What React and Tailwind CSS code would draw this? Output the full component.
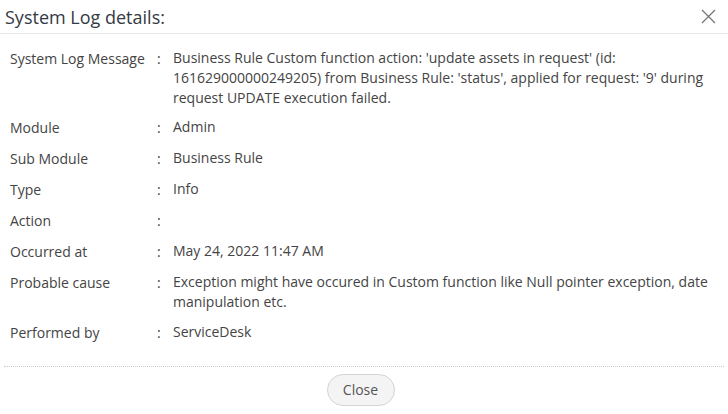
const rows = [
  {
    label: 'System Log Message',
    value:
      "Business Rule Custom function action: 'update assets in request' (id: 161629000000249205) from Business Rule: 'status', applied for request: '9' during request UPDATE execution failed.",
  },
  { label: 'Module', value: 'Admin' },
  { label: 'Sub Module', value: 'Business Rule' },
  { label: 'Type', value: 'Info' },
  { label: 'Action', value: '' },
  { label: 'Occurred at', value: 'May 24, 2022 11:47 AM' },
  {
    label: 'Probable cause',
    value: 'Exception might have occured in Custom function like Null pointer exception, date manipulation etc.',
  },
  { label: 'Performed by', value: 'ServiceDesk' },
];

export default function App() {
  return (
    <div className="flex h-[414px] w-[728px] flex-col bg-white font-['Open_Sans',sans-serif] text-[#444]">
      <div className="flex h-[34px] shrink-0 items-center justify-between border-b border-[#e6e6e6] pl-[5px] pr-[10px]">
        <h2 className="text-[18px] leading-[24px] text-[#333a44]">System Log details:</h2>
        <button type="button" className="flex h-[20px] w-[20px] items-center justify-center text-[#777]">
          <svg width="15" height="15" viewBox="0 0 15 15" fill="none" stroke="currentColor" strokeWidth="1.3">
            <path d="M1 1L14 14M14 1L1 14" />
          </svg>
        </button>
      </div>

      <div className="flex-1 pl-[10px] pr-[8px] pt-[9px]">
        {rows.map((r, i) => (
          <div key={r.label} className={`flex text-[14px] ${i === 0 ? 'pt-[5px] pb-[4px]' : 'py-[5px]'}`}>
            <div className="w-[147px] shrink-0 leading-[21px]">{r.label}</div>
            <div className="w-[16px] shrink-0 leading-[21px]">:</div>
            <div className="flex-1 leading-[20px]">{r.value}</div>
          </div>
        ))}
      </div>

      <div className="mx-[4px] border-t border-dotted border-[#ccc]" />
      <div className="flex h-[47px] shrink-0 items-center justify-center pb-[2px] pr-[7px]">
        <button
          type="button"
          className="h-[32px] w-[68px] rounded-full border border-[#d4d4d4] bg-[#f4f4f4] text-[14px] text-[#555]"
        >
          Close
        </button>
      </div>
    </div>
  );
}
